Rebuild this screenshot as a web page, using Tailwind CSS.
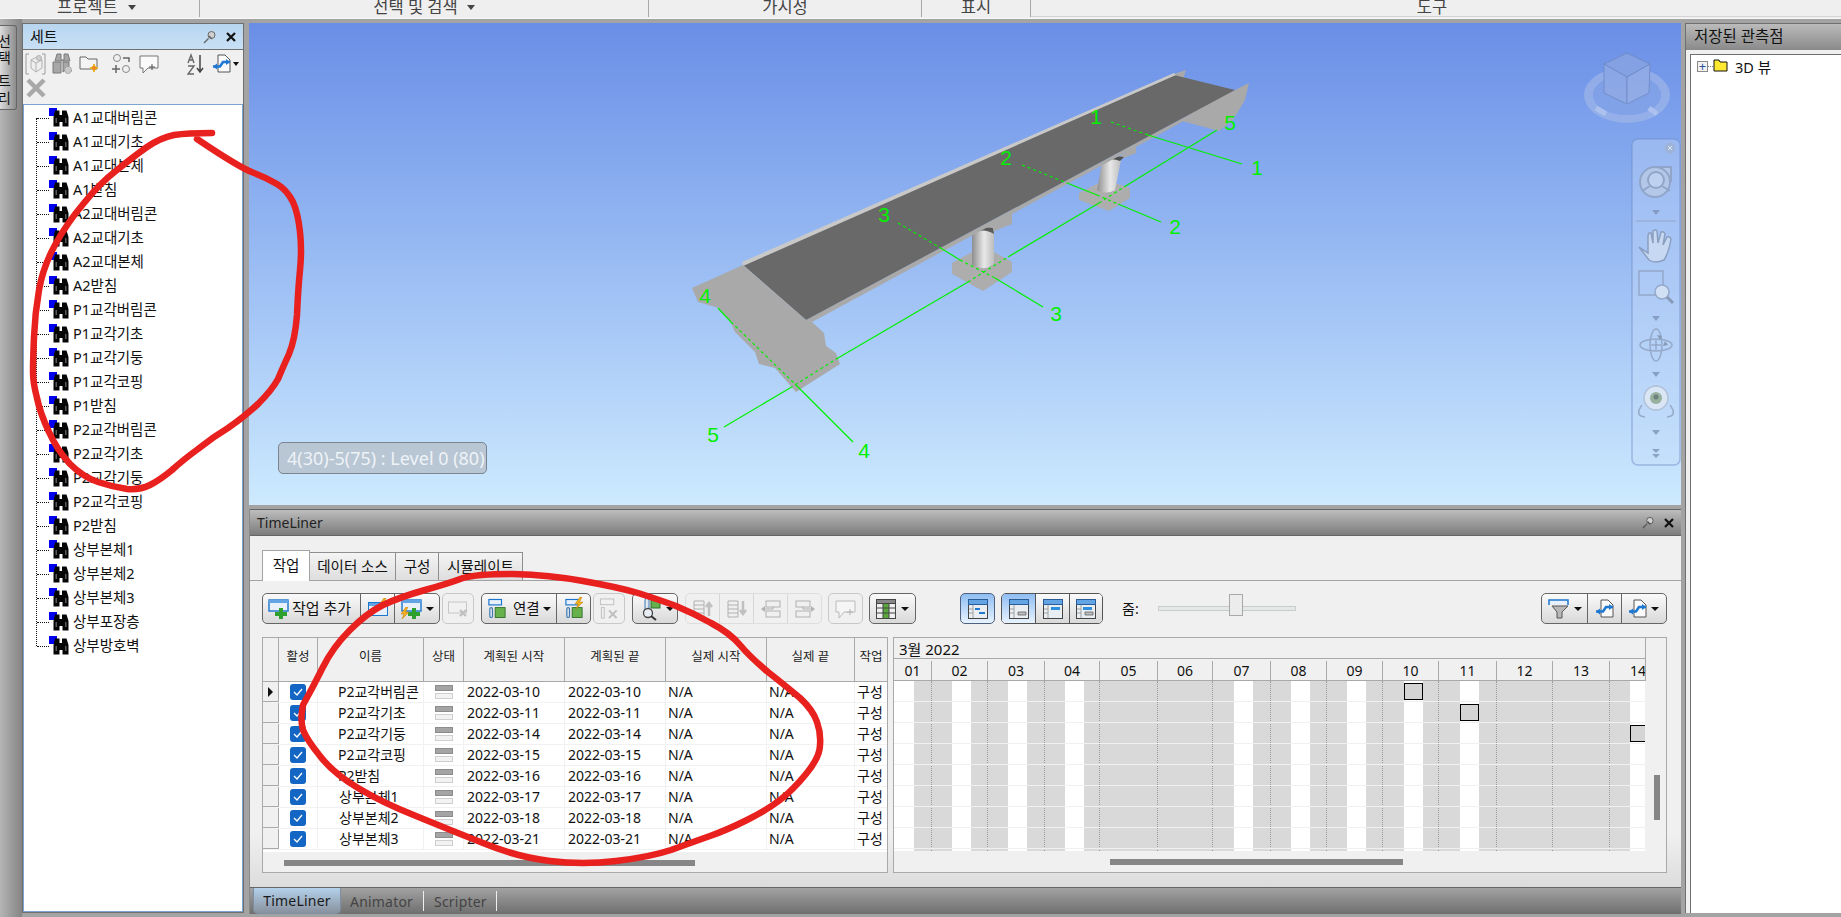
<!DOCTYPE html>
<html lang="ko">
<head>
<meta charset="utf-8">
<script src="https://cdn.jsdelivr.net/npm/@tailwindcss/browser@4"></script>
<title>TimeLiner</title>
</head>
<body class="w-[1841px] h-[917px] overflow-hidden bg-[#a3a3a3] font-['Noto_Sans','Noto_Sans_CJK_KR',sans-serif] text-[#111] relative">

<svg class="absolute w-0 h-0" aria-hidden="true">
  <defs>
    <symbol id="bin" viewBox="0 0 20 20">
      <rect x="0" y="0" width="8" height="8" fill="#0000ee"/>
      <path d="M4.500 9 6 2.500H10.500V7H13V2.500H17.500L19.500 9V18.500H13.500V14H10.500V18.500H4.500Z" fill="#050505"/>
      <rect x="6.500" y="10" width="1.500" height="5" fill="#5a5a5a"/><rect x="16" y="10" width="1.500" height="5" fill="#5a5a5a"/>
    </symbol>
    <symbol id="task" viewBox="0 0 22 20">
      <rect x="1" y="1" width="19" height="11" fill="#e8f1fb" stroke="#1b76cf" stroke-width="1.400"/>
      <rect x="1" y="1" width="19" height="3" fill="#62a4e4"/>
      <path d="M11 9h4v4h4v4h-4v3h-4v-3H7v-4h4Z" fill="#2ea02e"/>
    </symbol>
    <symbol id="bolt" viewBox="0 0 10 12"><path d="M6 0 1 7h3L2 12l7-7H5.500L8 0Z" fill="#f2b01e" stroke="#b97a06" stroke-width=".5"/></symbol>
    <symbol id="chain" viewBox="0 0 20 22">
      <rect x="1" y="1" width="14" height="6" fill="#e8f1fb" stroke="#1b76cf" stroke-width="1.300"/>
      <rect x="8" y="10" width="11" height="11" fill="#67b14c" stroke="#2d6e2a"/>
      <rect x="2" y="10" width="3" height="11" rx="1.500" fill="#dfe7ef" stroke="#3e78b0" stroke-width="1.300"/>
    </symbol>
    <symbol id="exp" viewBox="0 0 20 20">
      <path d="M6 1H13L18 6V18H6Z" fill="#fafafa" stroke="#555"/>
      <path d="M1 12.500H8L11 8H18" fill="none" stroke="#1f78d1" stroke-width="2.600"/>
      <path d="M1 12.500 5 9.500V15.500ZM18 8 14 5V11Z" fill="#1f78d1"/>
    </symbol>
    <symbol id="gantt" viewBox="0 0 20 20">
      <rect x=".5" y=".5" width="19" height="19" fill="#e9eef3" stroke="#444"/>
      <rect x=".5" y=".5" width="19" height="5" fill="#62a4e4" stroke="#2a5d97"/>
      <path d="M5 6v13M1 10h4M1 14h4" stroke="#a0a0a0" fill="none"/>
    </symbol>
  </defs>
</svg>

<!-- top ribbon labels -->
<div class="h-[19px] flex bg-[#efefef] border-b border-[#f8f8f8] text-[16.5px] text-[#444] leading-[13px]">
  <div class="w-[200px] h-[17px] border-r border-[#a9a9a9] pl-[57px] flex items-start gap-[10px]"><span>프로젝트</span><span class="mt-[5px] w-0 h-0 border-x-[4px] border-t-[5px] border-x-transparent border-t-[#444]"></span></div>
  <div class="w-[449px] h-[17px] border-r border-[#a9a9a9] flex justify-center items-start gap-[9px]"><span>선택 및 검색</span><span class="mt-[5px] w-0 h-0 border-x-[4px] border-t-[5px] border-x-transparent border-t-[#444]"></span></div>
  <div class="w-[273px] h-[17px] border-r border-[#a9a9a9] text-center">가시성</div>
  <div class="w-[109px] h-[17px] border-r border-[#a9a9a9] text-center">표시</div>
  <div class="flex-1 h-[17px] text-center pr-[8px] border-b border-[#d4d4d4]">도구</div>
</div>

<div class="flex h-[898px]">
  <!-- collapsed tab -->
  <div class="w-[22px] bg-gradient-to-r from-[#b5b5b5] to-[#858585] pt-[6px] shrink-0">
    <div class="w-[17px] h-[85px] rounded-r-[3px] border border-l-0 border-[#666] bg-gradient-to-r from-[#dcdcdc] to-[#8c8c8c] overflow-hidden flex flex-col items-end pr-[5px] text-[14px] leading-[17px] text-[#111] pt-[6px]">
      <span>선</span><span>택</span><span class="mt-[6px]">트</span><span>리</span>
    </div>
  </div>

  <!-- sets panel -->
  <div class="w-[222px] mt-[4px] mb-[4px] border border-[#6f6f6f] bg-[#f0f0f0] flex flex-col shrink-0">
    <div class="h-[26px] flex items-center justify-between px-[7px] bg-gradient-to-b from-[#b8d5ef] to-[#c8e0f5] border-b border-[#6f6f6f]">
      <span class="text-[15px] font-normal">세트</span>
      <span class="flex items-center gap-[9px]">
        <svg class="w-[14px] h-[14px]" viewBox="0 0 14 14"><circle cx="8.500" cy="5" r="3.500" fill="#d0d0d0" stroke="#666"/><path d="M6 6 9 9M5.500 8.500 1 13" stroke="#666" stroke-width="1.400"/></svg>
        <svg class="w-[10px] h-[10px]" viewBox="0 0 10 10"><path d="M1 1 9 9M9 1 1 9" stroke="#111" stroke-width="2.200"/></svg>
      </span>
    </div>
    <div class="h-[54px] relative shrink-0">
      <!-- row 1 -->
      <div class="flex items-center h-[25px] pl-[2px] pt-[2px]">
        <svg class="w-[21px] h-[22px] opacity-60" viewBox="0 0 21 22"><path d="M4 1H1V21H4M17 1H20V21H17" fill="none" stroke="#666"/><path d="M6 7 12 4 17 7V15L11 19 6 15Z" fill="#eee" stroke="#888"/><path d="M6 7 11 10 17 7M11 10V19" fill="none" stroke="#888"/><circle cx="14" cy="5" r="2.500" fill="#bbb" stroke="#888"/></svg>
        <svg class="w-[21px] h-[22px] ml-[6px] opacity-75" viewBox="0 0 21 22"><path d="M3 8 5 1H9V7H12V1H16L18 8ZM1 9H9V20H1ZM11 9H17V14L11 19Z" fill="#8f8f8f" stroke="#555"/><circle cx="16" cy="17" r="3.500" fill="#bdbdbd" stroke="#777" stroke-dasharray="2 1"/></svg>
        <svg class="w-[20px] h-[20px] ml-[6px]" viewBox="0 0 20 20"><path d="M1 3H7L9 5H18V15H1Z" fill="#f4f4f4" stroke="#666"/><path d="M15 10l1.200 2.800 2.800 1.200-2.800 1.200-1.200 2.800-1.200-2.800-2.800-1.200 2.800-1.200Z" fill="#f0801e" stroke="#e8b41c"/></svg>
        <svg class="w-[22px] h-[20px] ml-[12px]" viewBox="0 0 22 20"><circle cx="6" cy="4" r="3.500" fill="none" stroke="#888"/><circle cx="15" cy="15" r="3.500" fill="none" stroke="#888"/><path d="M12 4H18V8M1 15H9M5 11V19" fill="none" stroke="#666" stroke-width="1.500"/></svg>
        <svg class="w-[20px] h-[20px] ml-[6px]" viewBox="0 0 20 20"><path d="M1 2H19V14H9L4 19V14H1Z" fill="#fafafa" stroke="#777"/><path d="M13 10v6M10 13h6" stroke="#555"/></svg>
        <svg class="w-[18px] h-[22px] ml-[28px]" viewBox="0 0 18 22"><path d="M13 2V18M10 15 13 19 16 15" fill="none" stroke="#444" stroke-width="1.500"/><path d="M1 10 4 2 7 10M2 7H6M1 13H7L1 21H7" fill="none" stroke="#666" stroke-width="1.400"/></svg>
        <svg class="w-[20px] h-[20px] ml-[7px]"><use href="#exp"/></svg>
        <span class="ml-[1px] w-0 h-0 border-x-[3.500px] border-t-[4px] border-x-transparent border-t-[#111]"></span>
      </div>
      <div class="pl-[3px] pt-[3px]">
        <svg class="w-[20px] h-[20px]" viewBox="0 0 20 20"><path d="M2 2 18 18M18 2 2 18" stroke="#a8a8a8" stroke-width="4.500"/></svg>
      </div>
    </div>
    <div class="flex-1 bg-white border border-[#7ba3cf] relative text-[14.5px]">
      <span class="absolute left-[12px] top-[13px] h-[528px] border-l border-dotted border-[#111]"></span>
      <div class="pl-[13px] pt-[1px]">
        <div class="h-[24px] flex items-center"><span class="w-[12px] border-t border-dotted border-[#111]"></span><svg class="w-[20px] h-[20px]"><use href="#bin"/></svg><span class="ml-[3px] pl-[1px]">A1교대버림콘</span></div>
        <div class="h-[24px] flex items-center"><span class="w-[12px] border-t border-dotted border-[#111]"></span><svg class="w-[20px] h-[20px]"><use href="#bin"/></svg><span class="ml-[3px] pl-[1px]">A1교대기초</span></div>
        <div class="h-[24px] flex items-center"><span class="w-[12px] border-t border-dotted border-[#111]"></span><svg class="w-[20px] h-[20px]"><use href="#bin"/></svg><span class="ml-[3px] pl-[1px]">A1교대본체</span></div>
        <div class="h-[24px] flex items-center"><span class="w-[12px] border-t border-dotted border-[#111]"></span><svg class="w-[20px] h-[20px]"><use href="#bin"/></svg><span class="ml-[3px] pl-[1px]">A1받침</span></div>
        <div class="h-[24px] flex items-center"><span class="w-[12px] border-t border-dotted border-[#111]"></span><svg class="w-[20px] h-[20px]"><use href="#bin"/></svg><span class="ml-[3px] pl-[1px]">A2교대버림콘</span></div>
        <div class="h-[24px] flex items-center"><span class="w-[12px] border-t border-dotted border-[#111]"></span><svg class="w-[20px] h-[20px]"><use href="#bin"/></svg><span class="ml-[3px] pl-[1px]">A2교대기초</span></div>
        <div class="h-[24px] flex items-center"><span class="w-[12px] border-t border-dotted border-[#111]"></span><svg class="w-[20px] h-[20px]"><use href="#bin"/></svg><span class="ml-[3px] pl-[1px]">A2교대본체</span></div>
        <div class="h-[24px] flex items-center"><span class="w-[12px] border-t border-dotted border-[#111]"></span><svg class="w-[20px] h-[20px]"><use href="#bin"/></svg><span class="ml-[3px] pl-[1px]">A2받침</span></div>
        <div class="h-[24px] flex items-center"><span class="w-[12px] border-t border-dotted border-[#111]"></span><svg class="w-[20px] h-[20px]"><use href="#bin"/></svg><span class="ml-[3px] pl-[1px]">P1교각버림콘</span></div>
        <div class="h-[24px] flex items-center"><span class="w-[12px] border-t border-dotted border-[#111]"></span><svg class="w-[20px] h-[20px]"><use href="#bin"/></svg><span class="ml-[3px] pl-[1px]">P1교각기초</span></div>
        <div class="h-[24px] flex items-center"><span class="w-[12px] border-t border-dotted border-[#111]"></span><svg class="w-[20px] h-[20px]"><use href="#bin"/></svg><span class="ml-[3px] pl-[1px]">P1교각기둥</span></div>
        <div class="h-[24px] flex items-center"><span class="w-[12px] border-t border-dotted border-[#111]"></span><svg class="w-[20px] h-[20px]"><use href="#bin"/></svg><span class="ml-[3px] pl-[1px]">P1교각코핑</span></div>
        <div class="h-[24px] flex items-center"><span class="w-[12px] border-t border-dotted border-[#111]"></span><svg class="w-[20px] h-[20px]"><use href="#bin"/></svg><span class="ml-[3px] pl-[1px]">P1받침</span></div>
        <div class="h-[24px] flex items-center"><span class="w-[12px] border-t border-dotted border-[#111]"></span><svg class="w-[20px] h-[20px]"><use href="#bin"/></svg><span class="ml-[3px] pl-[1px]">P2교각버림콘</span></div>
        <div class="h-[24px] flex items-center"><span class="w-[12px] border-t border-dotted border-[#111]"></span><svg class="w-[20px] h-[20px]"><use href="#bin"/></svg><span class="ml-[3px] pl-[1px]">P2교각기초</span></div>
        <div class="h-[24px] flex items-center"><span class="w-[12px] border-t border-dotted border-[#111]"></span><svg class="w-[20px] h-[20px]"><use href="#bin"/></svg><span class="ml-[3px] pl-[1px]">P2교각기둥</span></div>
        <div class="h-[24px] flex items-center"><span class="w-[12px] border-t border-dotted border-[#111]"></span><svg class="w-[20px] h-[20px]"><use href="#bin"/></svg><span class="ml-[3px] pl-[1px]">P2교각코핑</span></div>
        <div class="h-[24px] flex items-center"><span class="w-[12px] border-t border-dotted border-[#111]"></span><svg class="w-[20px] h-[20px]"><use href="#bin"/></svg><span class="ml-[3px] pl-[1px]">P2받침</span></div>
        <div class="h-[24px] flex items-center"><span class="w-[12px] border-t border-dotted border-[#111]"></span><svg class="w-[20px] h-[20px]"><use href="#bin"/></svg><span class="ml-[3px] pl-[1px]">상부본체1</span></div>
        <div class="h-[24px] flex items-center"><span class="w-[12px] border-t border-dotted border-[#111]"></span><svg class="w-[20px] h-[20px]"><use href="#bin"/></svg><span class="ml-[3px] pl-[1px]">상부본체2</span></div>
        <div class="h-[24px] flex items-center"><span class="w-[12px] border-t border-dotted border-[#111]"></span><svg class="w-[20px] h-[20px]"><use href="#bin"/></svg><span class="ml-[3px] pl-[1px]">상부본체3</span></div>
        <div class="h-[24px] flex items-center"><span class="w-[12px] border-t border-dotted border-[#111]"></span><svg class="w-[20px] h-[20px]"><use href="#bin"/></svg><span class="ml-[3px] pl-[1px]">상부포장층</span></div>
        <div class="h-[24px] flex items-center"><span class="w-[12px] border-t border-dotted border-[#111]"></span><svg class="w-[20px] h-[20px]"><use href="#bin"/></svg><span class="ml-[3px] pl-[1px]">상부방호벽</span></div>
      </div>
    </div>
  </div>

  <!-- centre -->
  <div class="ml-[5px] w-[1432px] flex flex-col shrink-0">
    <!-- viewport -->
    <div class="mt-[4px] h-[482px] relative overflow-hidden bg-gradient-to-b from-[#6a8ee6] to-[#cdeafe]">
      <svg class="absolute inset-0 w-[1432px] h-[482px]" viewBox="249 23 1432 482">
        <defs>
          <linearGradient id="cyl" x1="0" x2="1" y1="0" y2="0"><stop offset="0" stop-color="#8e8e8e"/><stop offset=".55" stop-color="#e8e8e8"/><stop offset="1" stop-color="#bdbdbd"/></linearGradient>
        </defs>
        <!-- back abutment -->
        <path d="M1174 74 1186 70 1182 82ZM1235 90 1249 83 1245 100 1233 120 1219 131 1182 121 1200 105Z" fill="#a9a9a9"/>
        <!-- crossheads -->
        <path d="M975 232 1012 213 1012 224 992 232Z" fill="#a9a9a9"/>
        <path d="M1118 158 1136 145 1136 153 1124 158Z" fill="#a9a9a9"/>
        <!-- footings -->
        <path d="M952 263 983 246 1012 262 1012 272 983 291 952 274Z" fill="#adadad"/>
        <path d="M1079 193 1105 180 1130 188 1130 198 1109 211 1079 200Z" fill="#adadad"/>
        <!-- columns -->
        <path d="M972 232Q984 226 994 228V264Q984 272 972 265Z" fill="url(#cyl)"/>
        <path d="M975 232Q985 226 993 228L994 234Q985 228 975 232Z" fill="#5a5a5a"/>
        <path d="M1102 163Q1112 157 1121 160L1115 190Q1106 195 1097 190Z" fill="url(#cyl)"/>
        <path d="M1108 160Q1116 155 1124 157L1120 161Q1113 158 1108 160Z" fill="#505050"/>
        <!-- deck -->
        <path d="M806 320 1235 90 1182 122 812 322Z" fill="#a9a9a9"/>
        <path d="M1174 75 1235 90 806 320 743 265Z" fill="#696969"/>
        <path d="M742 262 1174 73 1176 75 743 266Z" fill="#c9c9c9"/>
        <!-- near abutment -->
        <path d="M743 265 692 288 698 302 719 308 731 323 735 332 755 352 759 364 775 368 796 392 840 364 836 353 826 346 824 333 812 322 806 320Z" fill="#a9a9a9"/>
        <!-- grid lines -->
        <g fill="none" stroke="#00f000" stroke-width="1.200">
          <path d="M1111 122 1148 135" stroke-dasharray="3 3"/><path d="M1148 135 1242 164"/>
          <path d="M1022 165 1067 183" stroke-dasharray="3 3"/><path d="M1067 183 1097 195"/><path d="M1097 195 1118 204" stroke-dasharray="3 3"/><path d="M1118 204 1161 222"/>
          <path d="M898 223 939 247" stroke-dasharray="3 3"/><path d="M939 247 960 260"/><path d="M960 260 995 278" stroke-dasharray="3 3"/><path d="M995 278 1043 307"/>
          <path d="M718 308 731 322"/><path d="M731 322 796 385" stroke-dasharray="3 3"/><path d="M796 385 853 442"/>
          <path d="M724 427 790 388"/><path d="M790 388 838 358" stroke-dasharray="3 3"/><path d="M838 358 968 282"/><path d="M968 282 1008 257" stroke-dasharray="3 3"/><path d="M1008 257 1099 203"/><path d="M1099 203 1124 187" stroke-dasharray="3 3"/><path d="M1124 187 1217 130"/>
        </g>
        <g fill="#00f000" font-size="21" font-family="Liberation Sans, sans-serif" text-anchor="middle">
          <text x="1096" y="124">1</text><text x="1230" y="130">5</text><text x="1257" y="175">1</text>
          <text x="1006" y="165">2</text><text x="1175" y="234">2</text><text x="884" y="222">3</text>
          <text x="1056" y="321">3</text><text x="705" y="303">4</text><text x="864" y="458">4</text><text x="713" y="442">5</text>
        </g>
        <!-- view cube -->
        <g opacity=".55">
          <path fill-rule="evenodd" d="M1584 95a43 28 0 1 0 86 0a43 28 0 1 0 -86 0ZM1593 95a34 20 0 1 0 68 0a34 20 0 1 0 -68 0Z" fill="#a9bde8"/>
          <ellipse cx="1627" cy="95" rx="34" ry="20" fill="#88a6e6"/>
          <path d="M1627 53 1650 64 1627 77 1604 64Z" fill="#93aae0" stroke="#6f84b0"/>
          <path d="M1604 64 1627 77V104L1604 93Z" fill="#9fb3e2" stroke="#6f84b0"/>
          <path d="M1650 64 1627 77V104L1649 93Z" fill="#a6b9e4" stroke="#6f84b0"/>
          <path d="M1596 108 1606 114M1649 108 1657 114" stroke="#d6def2" stroke-width="5"/>
        </g>
        <!-- nav bar -->
        <rect x="1632" y="139" width="48" height="326" rx="6" fill="#c8dcf8" fill-opacity=".35" stroke="#6f8cc8" stroke-opacity=".5" stroke-width="1.500"/>
        <circle cx="1670" cy="148" r="5.500" fill="#9eb3d8"/><path d="M1668 146 1672 150M1672 146 1668 150" stroke="#dfe8f6"/>
        <g opacity=".8">
          <path d="M1640 182a15 15 0 1 1 15 15 15 15 0 0 1-15-15ZM1655 167H1671V182" fill="#b9cbe8" stroke="#8ea0c0" stroke-width="2"/>
          <circle cx="1656" cy="180" r="8" fill="#c6d6f0" stroke="#8ea0c0" stroke-width="2"/>
          <path d="M1642 191 1650 186M1670 191 1662 186" stroke="#8ea0c0" stroke-width="2"/>
          <path d="M1652 210h8l-4 5ZM1652 316h8l-4 5ZM1652 372h8l-4 5ZM1652 430h8l-4 5Z" fill="#7d93b8"/>
          <path d="M1636 221H1676" stroke="#8ea0c0"/>
          <path d="M1639 247 1648 253V237Q1648 232 1651 233L1653 243V231Q1656 229 1657 231L1658 243 1661 232Q1664 231 1665 234L1663 245 1667 237Q1670 236 1671 239 1669 252 1664 260 1655 264 1649 260Z" fill="#cfddf2" stroke="#8496b4" stroke-width="1.500"/>
          <rect x="1639" y="271" width="24" height="24" fill="none" stroke="#8ea0c0" stroke-width="1.500"/>
          <circle cx="1662" cy="292" r="7" fill="#dbe6f4" stroke="#8ea0c0" stroke-width="1.500"/><path d="M1667 297 1673 303" stroke="#7d8da8" stroke-width="3"/>
          <ellipse cx="1656" cy="345" rx="6" ry="16" fill="none" stroke="#8ea0c0" stroke-width="1.500"/>
          <ellipse cx="1656" cy="345" rx="16" ry="6" fill="none" stroke="#8ea0c0" stroke-width="1.500"/>
          <path d="M1656 340v10M1651 345h10" stroke="#7d8da8"/>
          <path d="M1657 335l5 1-2 4ZM1665 341l3 4-5 1Z" fill="#7d8da8"/>
          <circle cx="1656" cy="398" r="12" fill="#e2eaf4" stroke="#aebcd0" stroke-width="1.500"/>
          <circle cx="1656" cy="398" r="6" fill="#8ea888"/><circle cx="1656" cy="397" r="2.500" fill="#5a6b60"/>
          <path d="M1642 405Q1634 416 1645 417M1670 405Q1678 416 1667 417" fill="none" stroke="#8ea0c0" stroke-width="1.500"/>
          <path d="M1652 449h8l-4 4ZM1652 454h8l-4 4Z" fill="#7d93b8"/>
        </g>
      </svg>
      <div class="absolute left-[29px] top-[419px] w-[209px] h-[32px] rounded-[5px] border border-[#7b8490] bg-[#b9c6d3] text-[#eef3f8] text-[18px] leading-[30px] pl-[8px] whitespace-nowrap">4(30)-5(75) : Level 0 (80)</div>
    </div>

    <!-- TimeLiner panel -->
    <div class="mt-[4px] h-[405px] flex flex-col border-l border-[#8a8a8a]">
      <div class="h-[27px] shrink-0 bg-gradient-to-b from-[#bdbdbd] to-[#7c7c7c] border-t border-[#666] border-b border-b-[#666] flex items-center justify-between pl-[7px] pr-[7px]">
        <span class="text-[14px] text-[#222]">TimeLiner</span>
        <span class="flex items-center gap-[9px]">
          <svg class="w-[13px] h-[13px]" viewBox="0 0 14 14"><circle cx="8.500" cy="5" r="3.500" fill="#d0d0d0" stroke="#555"/><path d="M6 6 9 9M5.500 8.500 1 13" stroke="#555" stroke-width="1.400"/></svg>
          <svg class="w-[10px] h-[10px]" viewBox="0 0 10 10"><path d="M1 1 9 9M9 1 1 9" stroke="#111" stroke-width="2.200"/></svg>
        </span>
      </div>
      <div class="flex-1 bg-gradient-to-b from-[#f0f0f0] from-[85%] to-[#dcdcdc] pt-[14px] flex flex-col">
        <!-- tabs -->
        <div class="h-[31px] flex items-end border-b border-[#a3a3a3] pl-[12px] text-[14.5px]">
          <div class="h-[31px] w-[48px] bg-white border border-b-0 border-[#a3a3a3] text-center leading-[28px] -mb-[1px] z-10">작업</div>
          <div class="h-[28px] w-[86px] bg-gradient-to-b from-[#f4f4f4] to-[#dedede] border border-l-0 border-b-0 border-[#8e8e8e] text-center leading-[26px]">데이터 소스</div>
          <div class="h-[28px] w-[43px] bg-gradient-to-b from-[#f4f4f4] to-[#dedede] border border-l-0 border-b-0 border-[#8e8e8e] text-center leading-[26px]">구성</div>
          <div class="h-[28px] w-[84px] bg-gradient-to-b from-[#f4f4f4] to-[#dedede] border border-l-0 border-b-0 border-[#8e8e8e] text-center leading-[26px]">시뮬레이트</div>
        </div>

        <!-- toolbar -->
        <div class="h-[31px] mt-[12px] flex pl-[12px] text-[14.5px] items-stretch shrink-0">
          <div class="flex rounded-[5px] border border-[#666] bg-gradient-to-b from-[#fafafa] to-[#d9d9d9] overflow-hidden w-[178px]">
            <div class="w-[98px] border-r border-[#666] flex items-center pl-[5px]"><svg class="w-[22px] h-[20px]"><use href="#task"/></svg><span class="ml-[2px] text-[15px] whitespace-nowrap">작업 추가</span></div>
            <div class="w-[34px] border-r border-[#666] flex items-center justify-center relative"><svg class="w-[20px] h-[14px]" viewBox="0 0 20 14"><rect x=".5" y=".5" width="19" height="13" fill="#e8f1fb" stroke="#1b76cf"/><rect x="1" y="1" width="18" height="3" fill="#62a4e4"/></svg><svg class="absolute right-[6px] top-[4px] w-[10px] h-[12px]"><use href="#bolt"/></svg></div>
            <div class="flex-1 flex items-center pl-[6px] gap-[3px] relative"><svg class="w-[22px] h-[20px]"><use href="#task"/></svg><svg class="absolute left-[5px] top-[13px] w-[10px] h-[12px]"><use href="#bolt"/></svg><span class="w-0 h-0 border-x-[4px] border-t-[4px] border-x-transparent border-t-[#111]"></span></div>
          </div>
          <div class="ml-[2px] w-[32px] rounded-[5px] border border-[#c8c8c8] flex items-center justify-center"><svg class="w-[20px] h-[16px] opacity-40" viewBox="0 0 20 16"><rect x=".5" y="1" width="18" height="11" fill="#f4f4f4" stroke="#888"/><path d="M12 9 18 15M18 9 12 15" stroke="#777" stroke-width="2.200"/></svg></div>

          <div class="ml-[7px] flex rounded-[5px] border border-[#666] bg-gradient-to-b from-[#fafafa] to-[#d9d9d9] overflow-hidden w-[110px]">
            <div class="w-[75px] border-r border-[#666] flex items-center pl-[6px]"><svg class="w-[18px] h-[21px]"><use href="#chain"/></svg><span class="ml-[7px] whitespace-nowrap">연결</span><span class="ml-[3px] w-0 h-0 border-x-[4px] border-t-[4px] border-x-transparent border-t-[#111]"></span></div>
            <div class="flex-1 flex items-center justify-center relative"><svg class="w-[18px] h-[21px]"><use href="#chain"/></svg><svg class="absolute right-[6px] top-[3px] w-[10px] h-[12px]"><use href="#bolt"/></svg></div>
          </div>
          <div class="ml-[2px] w-[32px] rounded-[5px] border border-[#c8c8c8] flex items-center justify-center"><svg class="w-[20px] h-[21px] opacity-40" viewBox="0 0 20 22"><rect x="1" y="1" width="14" height="6" fill="#f4f4f4" stroke="#777"/><rect x="2" y="10" width="3" height="11" fill="none" stroke="#777"/><path d="M10 13 18 21M18 13 10 21" stroke="#777" stroke-width="2"/></svg></div>

          <div class="ml-[7px] w-[46px] rounded-[5px] border border-[#666] bg-gradient-to-b from-[#fafafa] to-[#d9d9d9] flex items-center pl-[6px] gap-[3px]"><svg class="w-[24px] h-[24px]" viewBox="0 0 24 24"><rect x="6" y="1" width="4" height="13" rx="2" fill="#dfe7ef" stroke="#3e78b0"/><rect x="12" y="2" width="9" height="9" fill="#67b14c" stroke="#2d6e2a"/><circle cx="9" cy="16" r="4.500" fill="#e8eef4" stroke="#444" stroke-width="1.300"/><path d="M12 19 17 23" stroke="#333" stroke-width="2"/></svg><span class="w-0 h-0 border-x-[4px] border-t-[4px] border-x-transparent border-t-[#111]"></span></div>

          <div class="ml-[7px] flex rounded-[5px] border border-[#c8c8c8] w-[137px] opacity-45">
            <div class="w-[34px] border-r border-[#bbb] flex items-center justify-center"><svg class="w-[20px] h-[19px]" viewBox="0 0 20 19"><path d="M1 2H11M1 6H11M1 10H11M1 14H11M1 2V18H11V2" fill="none" stroke="#666"/><path d="M16 17V5M13 8 16 4 19 8" fill="none" stroke="#888" stroke-width="2.500"/></svg></div>
            <div class="w-[34px] border-r border-[#bbb] flex items-center justify-center"><svg class="w-[20px] h-[19px]" viewBox="0 0 20 19"><path d="M1 2H11M1 6H11M1 10H11M1 14H11M1 2V18H11V2" fill="none" stroke="#666"/><path d="M16 2V14M13 11 16 15 19 11" fill="none" stroke="#888" stroke-width="2.500"/></svg></div>
            <div class="w-[34px] border-r border-[#bbb] flex items-center justify-center"><svg class="w-[20px] h-[18px]" viewBox="0 0 20 18"><rect x="5" y="1" width="14" height="6" fill="none" stroke="#666"/><rect x="5" y="11" width="14" height="6" fill="none" stroke="#666"/><path d="M0 9 4 6V12Z" fill="#666"/><path d="M4 9H12V7" stroke="#666" fill="none"/></svg></div>
            <div class="flex-1 flex items-center justify-center"><svg class="w-[20px] h-[18px]" viewBox="0 0 20 18"><rect x="1" y="1" width="14" height="6" fill="none" stroke="#666"/><rect x="1" y="11" width="14" height="6" fill="none" stroke="#666"/><path d="M20 9 16 6V12Z" fill="#666"/><path d="M8 7V9H16" stroke="#666" fill="none"/></svg></div>
          </div>

          <div class="ml-[6px] w-[35px] rounded-[5px] border border-[#c8c8c8] flex items-center justify-center"><svg class="w-[21px] h-[20px] opacity-50" viewBox="0 0 21 20"><path d="M1 2H20V13H9L4 19V13H1Z" fill="#fafafa" stroke="#888"/><path d="M15 10v6M12 13h6" stroke="#777"/></svg></div>

          <div class="ml-[6px] w-[47px] rounded-[5px] border border-[#666] bg-gradient-to-b from-[#fafafa] to-[#d9d9d9] flex items-center pl-[6px] gap-[5px]"><svg class="w-[20px] h-[20px]" viewBox="0 0 20 20"><rect x=".5" y=".5" width="19" height="19" fill="#f0f0f0" stroke="#444"/><rect x=".5" y=".5" width="19" height="4" fill="#888" stroke="#444"/><rect x="7" y="5" width="6" height="14" fill="#5aa83c"/><path d="M1 9H19M1 14H19M7 5V19M13 5V19" stroke="#444" fill="none"/></svg><span class="w-0 h-0 border-x-[4px] border-t-[4px] border-x-transparent border-t-[#111]"></span></div>

          <div class="ml-[44px] w-[35px] rounded-[5px] border border-[#4f5f80] bg-gradient-to-b from-[#8fbdf2] to-[#e8f3fe] flex items-center justify-center"><svg class="w-[20px] h-[20px]" viewBox="0 0 20 20"><use href="#gantt"/><path d="M7 9h5v2H7ZM11 13h6v2h-6Z" fill="#1f78d1"/></svg></div>

          <div class="ml-[6px] flex rounded-[5px] border border-[#555] overflow-hidden w-[102px]">
            <div class="w-[34px] border-r border-[#555] bg-gradient-to-b from-[#8fbdf2] to-[#e8f3fe] flex items-center justify-center"><svg class="w-[20px] h-[20px]" viewBox="0 0 20 20"><use href="#gantt"/><path d="M9 13h8v3H9Z" fill="#bdbdbd" stroke="#666" stroke-width=".8"/></svg></div>
            <div class="w-[34px] border-r border-[#555] bg-gradient-to-b from-[#fafafa] to-[#d9d9d9] flex items-center justify-center"><svg class="w-[20px] h-[20px]" viewBox="0 0 20 20"><use href="#gantt"/><path d="M8 8h9v3H8Z" fill="#2f8fdf"/></svg></div>
            <div class="flex-1 bg-gradient-to-b from-[#fafafa] to-[#d9d9d9] flex items-center justify-center"><svg class="w-[20px] h-[20px]" viewBox="0 0 20 20"><use href="#gantt"/><path d="M7 8h9v3H7Z" fill="#2f8fdf"/><path d="M9 13h8v3H9Z" fill="#bdbdbd" stroke="#666" stroke-width=".8"/></svg></div>
          </div>

          <span class="ml-[19px] w-[20px] text-[14px] leading-[31px] whitespace-nowrap">줌:</span>
          <div class="ml-[16px] w-[138px] relative flex items-center">
            <span class="w-full h-[5px] bg-[#e4e8e8] border border-[#c8cccc]"></span>
            <span class="absolute left-[71px] top-[1px] w-[14px] h-[22px] bg-[#ececec] border border-[#a8a8a8]"></span>
          </div>

          <div class="ml-[245px] flex rounded-[5px] border border-[#666] bg-gradient-to-b from-[#fafafa] to-[#d9d9d9] overflow-hidden w-[126px]">
            <div class="w-[46px] border-r border-[#666] flex items-center pl-[6px] gap-[4px]"><svg class="w-[22px] h-[20px]" viewBox="0 0 22 20"><path d="M1 6V1H20V6" fill="#e8f1fb" stroke="#1b76cf" stroke-width="1.500"/><path d="M4 7H20L14 13V19H9V13Z" fill="#b8b8b8" stroke="#555"/></svg><span class="w-0 h-0 border-x-[4px] border-t-[4px] border-x-transparent border-t-[#111]"></span></div>
            <div class="w-[34px] border-r border-[#666] flex items-center justify-center"><svg class="w-[20px] h-[20px]"><use href="#exp"/></svg></div>
            <div class="flex-1 flex items-center pl-[6px] gap-[3px]"><svg class="w-[20px] h-[20px]"><use href="#exp"/></svg><span class="w-0 h-0 border-x-[4px] border-t-[4px] border-x-transparent border-t-[#111]"></span></div>
          </div>
        </div>

        <!-- grid + gantt -->
        <div class="h-[236px] mt-[13px] flex pl-[12px] shrink-0">
          <div class="w-[626px] border border-[#a9a9a9] flex flex-col text-[14px]">
            <div class="h-[44px] grid grid-cols-[16px_39px_106px_40px_101px_101px_101px_88px_32px] border-b border-[#a9a9a9] text-[12.5px] text-[#222] text-center leading-[38px] bg-[#f0f0f0]">
              <div class="border-r border-[#a9a9a9]"></div>
              <div class="border-r border-[#a9a9a9]">활성</div>
              <div class="border-r border-[#a9a9a9]">이름</div>
              <div class="border-r border-[#a9a9a9]">상태</div>
              <div class="border-r border-[#a9a9a9]">계획된 시작</div>
              <div class="border-r border-[#a9a9a9]">계획된 끝</div>
              <div class="border-r border-[#a9a9a9]">실제 시작</div>
              <div class="border-r border-[#a9a9a9]">실제 끝</div>
              <div>작업</div>
            </div>
            <div class="h-[170px] overflow-hidden bg-white">
              <div class="h-[21px] grid grid-cols-[16px_39px_106px_40px_101px_101px_101px_88px_32px] border-b border-[#f1f1f1] leading-[20px]">
                <div class="bg-[#f0f0f0] border-r border-b border-[#a9a9a9] flex items-center justify-center"><span class="w-0 h-0 border-y-[5px] border-l-[5px] border-y-transparent border-l-[#111]"></span></div>
                <div class="border-r border-[#f1f1f1] flex items-center justify-center"><span class="w-[16px] h-[16px] rounded-[3px] bg-[#1366c3] flex items-center justify-center"><svg class="w-[10px] h-[8px]" viewBox="0 0 10 8"><path d="M1 4 4 7 9 1" fill="none" stroke="#fff" stroke-width="1.300"/></svg></span></div>
                <div class="border-r border-[#f1f1f1] pl-[20px]">P2교각버림콘</div>
                <div class="border-r border-[#f1f1f1] flex flex-col items-center gap-[2px] pt-[3px]"><span class="w-[18px] h-[6px] bg-[#a4a4a4] border border-[#8c8c8c]"></span><span class="w-[18px] h-[6px] bg-[#f2f2f2] border border-[#cfcfcf]"></span></div>
                <div class="border-r border-[#f1f1f1] pl-[3px]">2022-03-10</div>
                <div class="border-r border-[#f1f1f1] pl-[3px]">2022-03-10</div>
                <div class="border-r border-[#f1f1f1] pl-[2px]">N/A</div>
                <div class="border-r border-[#f1f1f1] pl-[2px]">N/A</div>
                <div class="pl-[2px] whitespace-nowrap">구성</div>
              </div>
              <div class="h-[21px] grid grid-cols-[16px_39px_106px_40px_101px_101px_101px_88px_32px] border-b border-[#f1f1f1] leading-[20px]">
                <div class="bg-[#f0f0f0] border-r border-b border-[#a9a9a9]"></div>
                <div class="border-r border-[#f1f1f1] flex items-center justify-center"><span class="w-[16px] h-[16px] rounded-[3px] bg-[#1366c3] flex items-center justify-center"><svg class="w-[10px] h-[8px]" viewBox="0 0 10 8"><path d="M1 4 4 7 9 1" fill="none" stroke="#fff" stroke-width="1.300"/></svg></span></div>
                <div class="border-r border-[#f1f1f1] pl-[20px]">P2교각기초</div>
                <div class="border-r border-[#f1f1f1] flex flex-col items-center gap-[2px] pt-[3px]"><span class="w-[18px] h-[6px] bg-[#a4a4a4] border border-[#8c8c8c]"></span><span class="w-[18px] h-[6px] bg-[#f2f2f2] border border-[#cfcfcf]"></span></div>
                <div class="border-r border-[#f1f1f1] pl-[3px]">2022-03-11</div>
                <div class="border-r border-[#f1f1f1] pl-[3px]">2022-03-11</div>
                <div class="border-r border-[#f1f1f1] pl-[2px]">N/A</div>
                <div class="border-r border-[#f1f1f1] pl-[2px]">N/A</div>
                <div class="pl-[2px] whitespace-nowrap">구성</div>
              </div>
              <div class="h-[21px] grid grid-cols-[16px_39px_106px_40px_101px_101px_101px_88px_32px] border-b border-[#f1f1f1] leading-[20px]">
                <div class="bg-[#f0f0f0] border-r border-b border-[#a9a9a9]"></div>
                <div class="border-r border-[#f1f1f1] flex items-center justify-center"><span class="w-[16px] h-[16px] rounded-[3px] bg-[#1366c3] flex items-center justify-center"><svg class="w-[10px] h-[8px]" viewBox="0 0 10 8"><path d="M1 4 4 7 9 1" fill="none" stroke="#fff" stroke-width="1.300"/></svg></span></div>
                <div class="border-r border-[#f1f1f1] pl-[20px]">P2교각기둥</div>
                <div class="border-r border-[#f1f1f1] flex flex-col items-center gap-[2px] pt-[3px]"><span class="w-[18px] h-[6px] bg-[#a4a4a4] border border-[#8c8c8c]"></span><span class="w-[18px] h-[6px] bg-[#f2f2f2] border border-[#cfcfcf]"></span></div>
                <div class="border-r border-[#f1f1f1] pl-[3px]">2022-03-14</div>
                <div class="border-r border-[#f1f1f1] pl-[3px]">2022-03-14</div>
                <div class="border-r border-[#f1f1f1] pl-[2px]">N/A</div>
                <div class="border-r border-[#f1f1f1] pl-[2px]">N/A</div>
                <div class="pl-[2px] whitespace-nowrap">구성</div>
              </div>
              <div class="h-[21px] grid grid-cols-[16px_39px_106px_40px_101px_101px_101px_88px_32px] border-b border-[#f1f1f1] leading-[20px]">
                <div class="bg-[#f0f0f0] border-r border-b border-[#a9a9a9]"></div>
                <div class="border-r border-[#f1f1f1] flex items-center justify-center"><span class="w-[16px] h-[16px] rounded-[3px] bg-[#1366c3] flex items-center justify-center"><svg class="w-[10px] h-[8px]" viewBox="0 0 10 8"><path d="M1 4 4 7 9 1" fill="none" stroke="#fff" stroke-width="1.300"/></svg></span></div>
                <div class="border-r border-[#f1f1f1] pl-[20px]">P2교각코핑</div>
                <div class="border-r border-[#f1f1f1] flex flex-col items-center gap-[2px] pt-[3px]"><span class="w-[18px] h-[6px] bg-[#a4a4a4] border border-[#8c8c8c]"></span><span class="w-[18px] h-[6px] bg-[#f2f2f2] border border-[#cfcfcf]"></span></div>
                <div class="border-r border-[#f1f1f1] pl-[3px]">2022-03-15</div>
                <div class="border-r border-[#f1f1f1] pl-[3px]">2022-03-15</div>
                <div class="border-r border-[#f1f1f1] pl-[2px]">N/A</div>
                <div class="border-r border-[#f1f1f1] pl-[2px]">N/A</div>
                <div class="pl-[2px] whitespace-nowrap">구성</div>
              </div>
              <div class="h-[21px] grid grid-cols-[16px_39px_106px_40px_101px_101px_101px_88px_32px] border-b border-[#f1f1f1] leading-[20px]">
                <div class="bg-[#f0f0f0] border-r border-b border-[#a9a9a9]"></div>
                <div class="border-r border-[#f1f1f1] flex items-center justify-center"><span class="w-[16px] h-[16px] rounded-[3px] bg-[#1366c3] flex items-center justify-center"><svg class="w-[10px] h-[8px]" viewBox="0 0 10 8"><path d="M1 4 4 7 9 1" fill="none" stroke="#fff" stroke-width="1.300"/></svg></span></div>
                <div class="border-r border-[#f1f1f1] pl-[20px]">P2받침</div>
                <div class="border-r border-[#f1f1f1] flex flex-col items-center gap-[2px] pt-[3px]"><span class="w-[18px] h-[6px] bg-[#a4a4a4] border border-[#8c8c8c]"></span><span class="w-[18px] h-[6px] bg-[#f2f2f2] border border-[#cfcfcf]"></span></div>
                <div class="border-r border-[#f1f1f1] pl-[3px]">2022-03-16</div>
                <div class="border-r border-[#f1f1f1] pl-[3px]">2022-03-16</div>
                <div class="border-r border-[#f1f1f1] pl-[2px]">N/A</div>
                <div class="border-r border-[#f1f1f1] pl-[2px]">N/A</div>
                <div class="pl-[2px] whitespace-nowrap">구성</div>
              </div>
              <div class="h-[21px] grid grid-cols-[16px_39px_106px_40px_101px_101px_101px_88px_32px] border-b border-[#f1f1f1] leading-[20px]">
                <div class="bg-[#f0f0f0] border-r border-b border-[#a9a9a9]"></div>
                <div class="border-r border-[#f1f1f1] flex items-center justify-center"><span class="w-[16px] h-[16px] rounded-[3px] bg-[#1366c3] flex items-center justify-center"><svg class="w-[10px] h-[8px]" viewBox="0 0 10 8"><path d="M1 4 4 7 9 1" fill="none" stroke="#fff" stroke-width="1.300"/></svg></span></div>
                <div class="border-r border-[#f1f1f1] pl-[21px]">상부본체1</div>
                <div class="border-r border-[#f1f1f1] flex flex-col items-center gap-[2px] pt-[3px]"><span class="w-[18px] h-[6px] bg-[#a4a4a4] border border-[#8c8c8c]"></span><span class="w-[18px] h-[6px] bg-[#f2f2f2] border border-[#cfcfcf]"></span></div>
                <div class="border-r border-[#f1f1f1] pl-[3px]">2022-03-17</div>
                <div class="border-r border-[#f1f1f1] pl-[3px]">2022-03-17</div>
                <div class="border-r border-[#f1f1f1] pl-[2px]">N/A</div>
                <div class="border-r border-[#f1f1f1] pl-[2px]">N/A</div>
                <div class="pl-[2px] whitespace-nowrap">구성</div>
              </div>
              <div class="h-[21px] grid grid-cols-[16px_39px_106px_40px_101px_101px_101px_88px_32px] border-b border-[#f1f1f1] leading-[20px]">
                <div class="bg-[#f0f0f0] border-r border-b border-[#a9a9a9]"></div>
                <div class="border-r border-[#f1f1f1] flex items-center justify-center"><span class="w-[16px] h-[16px] rounded-[3px] bg-[#1366c3] flex items-center justify-center"><svg class="w-[10px] h-[8px]" viewBox="0 0 10 8"><path d="M1 4 4 7 9 1" fill="none" stroke="#fff" stroke-width="1.300"/></svg></span></div>
                <div class="border-r border-[#f1f1f1] pl-[21px]">상부본체2</div>
                <div class="border-r border-[#f1f1f1] flex flex-col items-center gap-[2px] pt-[3px]"><span class="w-[18px] h-[6px] bg-[#a4a4a4] border border-[#8c8c8c]"></span><span class="w-[18px] h-[6px] bg-[#f2f2f2] border border-[#cfcfcf]"></span></div>
                <div class="border-r border-[#f1f1f1] pl-[3px]">2022-03-18</div>
                <div class="border-r border-[#f1f1f1] pl-[3px]">2022-03-18</div>
                <div class="border-r border-[#f1f1f1] pl-[2px]">N/A</div>
                <div class="border-r border-[#f1f1f1] pl-[2px]">N/A</div>
                <div class="pl-[2px] whitespace-nowrap">구성</div>
              </div>
              <div class="h-[21px] grid grid-cols-[16px_39px_106px_40px_101px_101px_101px_88px_32px] border-b border-[#f1f1f1] leading-[20px]">
                <div class="bg-[#f0f0f0] border-r border-b border-[#a9a9a9]"></div>
                <div class="border-r border-[#f1f1f1] flex items-center justify-center"><span class="w-[16px] h-[16px] rounded-[3px] bg-[#1366c3] flex items-center justify-center"><svg class="w-[10px] h-[8px]" viewBox="0 0 10 8"><path d="M1 4 4 7 9 1" fill="none" stroke="#fff" stroke-width="1.300"/></svg></span></div>
                <div class="border-r border-[#f1f1f1] pl-[21px]">상부본체3</div>
                <div class="border-r border-[#f1f1f1] flex flex-col items-center gap-[2px] pt-[3px]"><span class="w-[18px] h-[6px] bg-[#a4a4a4] border border-[#8c8c8c]"></span><span class="w-[18px] h-[6px] bg-[#f2f2f2] border border-[#cfcfcf]"></span></div>
                <div class="border-r border-[#f1f1f1] pl-[3px]">2022-03-21</div>
                <div class="border-r border-[#f1f1f1] pl-[3px]">2022-03-21</div>
                <div class="border-r border-[#f1f1f1] pl-[2px]">N/A</div>
                <div class="border-r border-[#f1f1f1] pl-[2px]">N/A</div>
                <div class="pl-[2px] whitespace-nowrap">구성</div>
              </div>
            </div>
            <div class="flex-1 bg-[#f0f0f0] pt-[8px] pl-[21px]"><div class="w-[411px] h-[6px] bg-[#868686]"></div></div>
          </div>

          <div class="ml-[5px] w-[774px] border border-[#a9a9a9] flex bg-[#f0f0f0]">
            <div class="w-[751px] flex flex-col shrink-0 overflow-hidden">
              <div class="h-[21px] border-b border-[#a9a9a9] text-[15px] leading-[22px] pl-[5px] shrink-0">3월 2022</div>
              <div class="h-[22px] flex border-b border-[#a9a9a9] text-[14px] text-center shrink-0">
                <div class="w-[38px] border-r border-[#a9a9a9] shrink-0 mt-[2px] leading-[20px]">01</div>
                <div class="w-[56px] border-r border-[#a9a9a9] shrink-0 mt-[2px] leading-[20px]">02</div>
                <div class="w-[57px] border-r border-[#a9a9a9] shrink-0 mt-[2px] leading-[20px]">03</div>
                <div class="w-[55px] border-r border-[#a9a9a9] shrink-0 mt-[2px] leading-[20px]">04</div>
                <div class="w-[58px] border-r border-[#a9a9a9] shrink-0 mt-[2px] leading-[20px]">05</div>
                <div class="w-[55px] border-r border-[#a9a9a9] shrink-0 mt-[2px] leading-[20px]">06</div>
                <div class="w-[58px] border-r border-[#a9a9a9] shrink-0 mt-[2px] leading-[20px]">07</div>
                <div class="w-[56px] border-r border-[#a9a9a9] shrink-0 mt-[2px] leading-[20px]">08</div>
                <div class="w-[56px] border-r border-[#a9a9a9] shrink-0 mt-[2px] leading-[20px]">09</div>
                <div class="w-[56px] border-r border-[#a9a9a9] shrink-0 mt-[2px] leading-[20px]">10</div>
                <div class="w-[58px] border-r border-[#a9a9a9] shrink-0 mt-[2px] leading-[20px]">11</div>
                <div class="w-[56px] border-r border-[#a9a9a9] shrink-0 mt-[2px] leading-[20px]">12</div>
                <div class="w-[57px] border-r border-[#a9a9a9] shrink-0 mt-[2px] leading-[20px]">13</div>
                <div class="w-[56px] shrink-0 mt-[2px] leading-[20px]">14</div>
              </div>
              <div class="h-[170px] relative shrink-0 bg-white overflow-hidden">
                <div class="absolute inset-0 flex">
                  <div class="w-[20px]"></div><div class="w-[38px] bg-[#d9d9d9]"></div>
                  <div class="w-[19px]"></div><div class="w-[37px] bg-[#d9d9d9]"></div>
                  <div class="w-[19px]"></div><div class="w-[38px] bg-[#d9d9d9]"></div>
                  <div class="w-[19px]"></div><div class="w-[150px] bg-[#d9d9d9]"></div>
                  <div class="w-[19px]"></div><div class="w-[38px] bg-[#d9d9d9]"></div>
                  <div class="w-[19px]"></div><div class="w-[37px] bg-[#d9d9d9]"></div>
                  <div class="w-[19px]"></div><div class="w-[38px] bg-[#d9d9d9]"></div>
                  <div class="w-[19px]"></div><div class="w-[37px] bg-[#d9d9d9]"></div>
                  <div class="w-[19px]"></div><div class="w-[151px] bg-[#d9d9d9]"></div>
                </div>
                <div class="absolute inset-0 flex">
                  <div class="w-[38px] border-r border-dotted border-[#9a9a9a] shrink-0"></div>
                  <div class="w-[56px] border-r border-dotted border-[#9a9a9a] shrink-0"></div>
                  <div class="w-[57px] border-r border-dotted border-[#9a9a9a] shrink-0"></div>
                  <div class="w-[55px] border-r border-dotted border-[#9a9a9a] shrink-0"></div>
                  <div class="w-[58px] border-r border-dotted border-[#9a9a9a] shrink-0"></div>
                  <div class="w-[55px] border-r border-dotted border-[#9a9a9a] shrink-0"></div>
                  <div class="w-[58px] border-r border-dotted border-[#9a9a9a] shrink-0"></div>
                  <div class="w-[56px] border-r border-dotted border-[#9a9a9a] shrink-0"></div>
                  <div class="w-[56px] border-r border-dotted border-[#9a9a9a] shrink-0"></div>
                  <div class="w-[56px] border-r border-dotted border-[#9a9a9a] shrink-0"></div>
                  <div class="w-[58px] border-r border-dotted border-[#9a9a9a] shrink-0"></div>
                  <div class="w-[56px] border-r border-dotted border-[#9a9a9a] shrink-0"></div>
                  <div class="w-[57px] border-r border-dotted border-[#9a9a9a] shrink-0"></div>
                </div>
                <div class="absolute inset-0 bg-[repeating-linear-gradient(to_bottom,transparent_0,transparent_20px,#f0f0f0_20px,#f0f0f0_21px)]"></div>
                <div class="absolute left-[510px] top-[2px] w-[19px] h-[17px] bg-[#d4d4d4] border border-black"></div>
                <div class="absolute left-[566px] top-[23px] w-[19px] h-[17px] bg-[#d4d4d4] border border-black"></div>
                <div class="absolute left-[736px] top-[44px] w-[19px] h-[17px] bg-[#d4d4d4] border border-black"></div>
              </div>
              <div class="flex-1 pt-[8px] pl-[216px]"><div class="w-[293px] h-[6px] bg-[#868686]"></div></div>
            </div>
            <div class="flex-1 border-l border-[#a9a9a9] h-[43px] relative">
              <div class="absolute left-[8px] top-[137px] w-[6px] h-[45px] bg-[#868686]"></div>
            </div>
          </div>
        </div>
      </div>
      <!-- bottom tabs -->
      <div class="h-[27px] shrink-0 bg-gradient-to-b from-[#a2a2a2] to-[#6f6f6f] border-t border-[#666] flex items-center text-[14px] tracking-[0.2px] text-[#444] pl-[3px]">
        <div class="h-[26px] w-[88px] rounded-b-[5px] bg-gradient-to-b from-[#b4d2ec] to-[#88919e] border border-t-0 border-[#7f8fa3] text-[#1a1a1a] text-center leading-[25px]">TimeLiner</div>
        <span class="ml-[9px]">Animator</span>
        <span class="ml-[10px] h-[20px] border-r border-[#eee]"></span>
        <span class="ml-[10px]">Scripter</span>
        <span class="ml-[9px] h-[20px] border-r border-[#eee]"></span>
      </div>
    </div>
  </div>

  <!-- right panel -->
  <div class="ml-[4px] w-[156px] mt-[4px] flex flex-col bg-[#efefef] border-l border-[#6f6f6f] border-t border-t-[#6f6f6f] mb-[4px]">
    <div class="h-[26px] bg-gradient-to-b from-[#bbb] to-[#8a8a8a] pl-[8px] text-[15.5px] leading-[25px] text-[#111]">저장된 관측점</div>
    <div class="flex-1 mt-[4px] ml-[4px] bg-white border-l border-t border-[#6f6f6f] pt-[5px] pl-[6px] flex items-start">
      <span class="w-[11px] h-[11px] mt-[1px] border border-[#8a8a8a] bg-[#f2f2f2] flex items-center justify-center text-[#2a4fa0] text-[13px] leading-[9px]">+</span>
      <span class="w-[5px] mt-[6px] border-t border-dotted border-[#777]"></span>
      <svg class="w-[15px] h-[13px] -mt-[1px]" viewBox="0 0 15 13"><path d="M1 3V1H6L7 3H14V12H1Z" fill="#ffe930" stroke="#111"/></svg>
      <span class="ml-[7px] text-[14.5px] leading-[14px]">3D 뷰</span>
    </div>
  </div>
</div>

<!-- hand-drawn red annotation -->
<svg class="absolute inset-0 w-[1841px] h-[917px] pointer-events-none" viewBox="0 0 1841 917" fill="none" stroke="#e8201e" stroke-width="6.500" stroke-linecap="round" stroke-linejoin="round">
  <path d="M212 133Q187 133 174 135Q160 138 147 147Q133 157 117 170Q100 183 84 203Q67 223 55 245Q43 267 39 290Q35 313 34 337Q33 360 33 372Q33 383 37 398Q40 413 49 432Q57 450 70 464Q83 477 98 482Q113 487 127 489Q140 490 150 485Q160 480 172 470Q183 460 198 449Q213 437 228 428Q243 418 258 404Q272 390 278 379Q283 367 289 354Q295 340 297 315Q298 290 300 270Q302 250 300 232Q298 213 293 202Q287 190 277 184Q267 178 254 173Q240 168 197 139"/>
  <path d="M303 705Q300 720 303 730Q307 740 320 756Q333 773 358 788Q383 803 416 816Q450 830 483 843Q517 857 550 861Q583 865 616 861Q650 857 671 850Q693 842 710 836Q727 830 747 820Q767 810 780 800Q793 790 806 774Q820 757 820 745Q821 733 817 722Q813 710 800 698Q787 687 768 672Q750 657 740 645Q730 633 711 623Q693 613 676 606Q660 600 638 593Q617 587 583 581Q550 575 513 574Q477 574 463 578Q450 583 425 590Q400 597 383 605Q367 613 350 630Q333 647 323 667Q313 687 303 705Z"/>
</svg>
</body>
</html>
